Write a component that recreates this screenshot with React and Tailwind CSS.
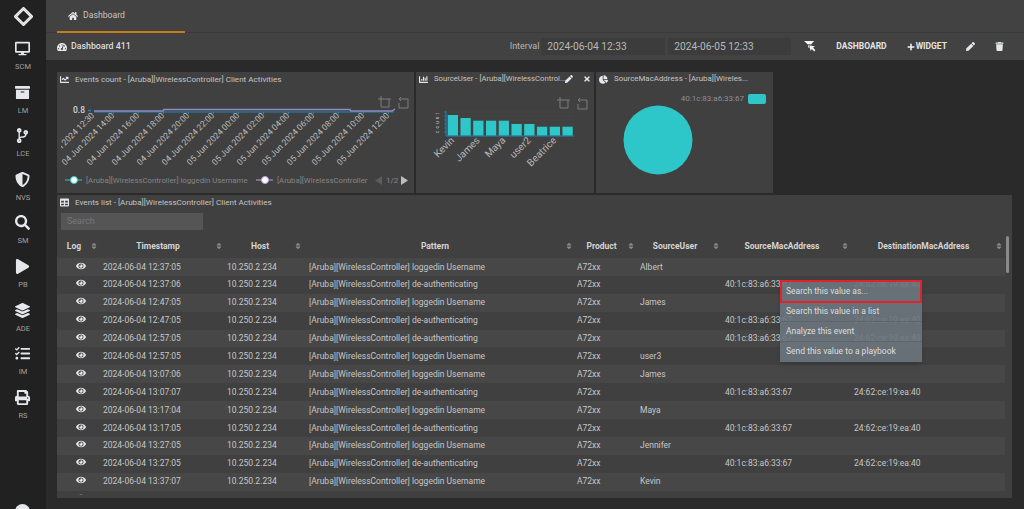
import React from "react";
import {
  FaDesktop,
  FaArchive,
  FaCodeBranch,
  FaShieldAlt,
  FaSearch,
  FaPlay,
  FaLayerGroup,
  FaTasks,
  FaPrint,
  FaHome,
  FaTachometerAlt,
  FaChartLine,
  FaChartBar,
  FaChartPie,
  FaTable,
  FaPen,
  FaTimes,
  FaEye,
  FaTrash,
  FaPlus,
  FaSort,
} from "react-icons/fa";

const navItems = [
  { label: "SCM", icon: FaDesktop },
  { label: "LM", icon: FaArchive },
  { label: "LCE", icon: FaCodeBranch },
  { label: "NVS", icon: FaShieldAlt },
  { label: "SM", icon: FaSearch },
  { label: "PB", icon: FaPlay },
  { label: "ADE", icon: FaLayerGroup },
  { label: "IM", icon: FaTasks },
  { label: "RS", icon: FaPrint },
];

const login = "[Aruba][WirelessController] loggedin Username";
const deauth = "[Aruba][WirelessController] de-authenticating";
const mac = "40:1c:83:a6:33:67";
const dest = "24:62:ce:19:ea:40";

const rows = [
  ["2024-06-04 12:37:05", login, "Albert", "", ""],
  ["2024-06-04 12:37:06", deauth, "", mac, dest],
  ["2024-06-04 12:47:05", login, "James", "", ""],
  ["2024-06-04 12:47:05", deauth, "", mac, dest],
  ["2024-06-04 12:57:05", deauth, "", mac, dest],
  ["2024-06-04 12:57:05", login, "user3", "", ""],
  ["2024-06-04 13:07:06", login, "James", "", ""],
  ["2024-06-04 13:07:07", deauth, "", mac, dest],
  ["2024-06-04 13:17:04", login, "Maya", "", ""],
  ["2024-06-04 13:17:05", deauth, "", mac, dest],
  ["2024-06-04 13:27:05", login, "Jennifer", "", ""],
  ["2024-06-04 13:27:05", deauth, "", mac, dest],
  ["2024-06-04 13:37:07", login, "Kevin", "", ""],
  ["2024-06-04 13:37:08", deauth, "", mac, dest],
];

const columns = [
  { name: "Log", width: "w-[43px]" },
  { name: "Timestamp", width: "w-[125px]" },
  { name: "Host", width: "w-[79px]" },
  { name: "Pattern", width: "w-[271px]" },
  { name: "Product", width: "w-[62px]" },
  { name: "SourceUser", width: "w-[85px]" },
  { name: "SourceMacAddress", width: "w-[129px]" },
  { name: "DestinationMacAddress", width: "w-[154px]" },
];

const chart1Labels = [
  "04 Jun 2024 14:00",
  "04 Jun 2024 16:00",
  "04 Jun 2024 18:00",
  "04 Jun 2024 20:00",
  "04 Jun 2024 22:00",
  "05 Jun 2024 00:00",
  "05 Jun 2024 02:00",
  "05 Jun 2024 04:00",
  "05 Jun 2024 06:00",
  "05 Jun 2024 08:00",
  "05 Jun 2024 10:00",
  "05 Jun 2024 12:00",
];

const bars = [115, 118, 120.7, 120.7, 120.7, 124, 124, 126.7, 126.7, 126.7];
const barLabels = ["Kevin", "James", "Maya", "user2", "Beatrice"];

function Toolbox({ x, y }) {
  return (
    <g fill="none" stroke="#7d7d7d" strokeWidth="1">
      <path d={`M${x + 3} ${y}v3h-3M${x + 3} ${y + 3}h8v8h-8v-8M${x + 11} ${y + 3}h2`} />
      <path d={`M${x + 21} ${y + 3}h9v9h-9v-5M${x + 21} ${y + 3}l2-2M${x + 21} ${y + 3}l2 2`} />
    </g>
  );
}

function Logo() {
  return (
    <svg viewBox="0 0 20 20" className="w-[19px] h-[19px] text-gray-100">
      <path d="M10 1.5 18.5 10 10 18.5 1.5 10Z" fill="none" stroke="currentColor" strokeWidth="3" strokeLinejoin="round" />
      <path d="M10 1.5 18.5 10 10 18.5 1.5 10Z" fill="none" stroke="#9a9a9a" strokeWidth="0.5" />
    </svg>
  );
}

function FilterCursor() {
  return (
    <svg viewBox="0 0 13 12" className="w-[12px] h-[11px] text-gray-100" fill="currentColor">
      <path d="M0 0h11L7.6 3.8 4.6 3.4 6 8 4.5 6.8V4Z" />
      <path d="M5.6 4.6 12 6 9.8 7.2 12.4 10 11 11.4 8.4 8.6 7.2 11Z" />
    </svg>
  );
}

function WidgetTitle({ icon: Icon, children, size = "text-[8.1px]" }) {
  return (
    <div className={`h-[14px] flex items-center gap-[6px] pl-[3px] ${size} text-[#c4c4c4] whitespace-nowrap`}>
      <Icon className="text-[9px] text-gray-200 shrink-0" />
      <span>{children}</span>
    </div>
  );
}

export default function App() {
  return (
    <div className="w-[1024px] h-[509px] overflow-hidden flex bg-[#2a2a2a] font-['Roboto',sans-serif]">
      <aside className="w-[46px] h-full shrink-0 bg-[#212121] relative flex flex-col items-center pt-[7px]">
        <Logo />
        <nav className="flex flex-col items-center mt-[13px]">
          {navItems.map(({ label, icon: Icon }) => (
            <div key={label} className="h-[43.6px] flex flex-col items-center text-[#a0a0a0]">
              <div className="h-[19px] flex items-center">
                <Icon className="text-[15px] text-gray-200" />
              </div>
              <span className="text-[7.5px] mt-[4px] leading-[10px]">{label}</span>
            </div>
          ))}
        </nav>
        <div className="absolute left-[15px] top-[504px] w-[15px] h-[15px] rounded-full bg-gray-200" />
      </aside>

      <main className="flex-1 min-w-0 flex flex-col">
        <div className="h-[33px] bg-[#424242] border-b border-[#3a3a3a] pl-[11px] shrink-0">
          <div className="w-[128px] h-[33px] border-b-2 border-[#c77c1e] flex items-center pl-[11px] pt-[1px] gap-[5px] text-[8.7px] text-[#c4c4c4]">
            <FaHome className="text-[10px] text-gray-200" />
            <span>Dashboard</span>
          </div>
        </div>

        <div className="h-[27px] bg-[#424242] shrink-0 flex items-center pl-[11px] text-[#dddddd]">
          <FaTachometerAlt className="text-[10px] text-gray-200" />
          <span className="ml-[4px] text-[8.8px] font-medium">Dashboard 411</span>
          <span className="ml-auto text-[9px] text-[#b5b5b5]">Interval</span>
          <div className="ml-[2px] w-[124px] h-[17px] bg-[#3c3c3c] flex items-center pl-[6px] text-[10.2px] text-[#b8b8b8]">2024-06-04 12:33</div>
          <div className="ml-[3px] w-[123px] h-[17px] bg-[#3c3c3c] flex items-center pl-[6px] text-[10.2px] text-[#b8b8b8]">2024-06-05 12:33</div>
          <div className="ml-[13px]"><FilterCursor /></div>
          <span className="ml-[20px] text-[8.5px] font-bold text-[#e4e4e4]">DASHBOARD</span>
          <FaPlus className="ml-[20px] text-[8px] text-gray-100" />
          <span className="ml-[1px] text-[8.5px] font-bold text-[#e4e4e4]">WIDGET</span>
          <FaPen className="ml-[19px] text-[9px] text-gray-200" />
          <FaTrash className="ml-[20px] mr-[20px] text-[9px] text-gray-200" />
        </div>

        <div className="pl-[11px] pt-[12px] flex flex-col gap-[2px] relative">
          <div className="flex gap-[2px] h-[121px]">
            <section className="w-[357px] bg-[#404040] overflow-hidden">
              <WidgetTitle icon={FaChartLine}>Events count - [Aruba][WirelessController] Client Activities</WidgetTitle>
              <svg viewBox="57 86 357 107" className="block w-[357px] h-[107px]">
                <text x="85" y="113" textAnchor="end" fontSize="8.5" fontWeight="500" fill="#d5d5d5">0.8</text>
                <path d="M88 110.5h3" stroke="#0b84c4" strokeWidth="1.5" />
                <path d="M94 112H394" stroke="#1f85b8" strokeWidth="1" />
                {chart1Labels.map((label, i) => (
                  <path key={label} d={`M${113.5 + i * 25} 112v2`} stroke="#1f85b8" />
                ))}
                <path d="M94 111H163L164 109.5H350L351 111H392L395 109" fill="none" stroke="#8f8cc4" strokeWidth="1.5" />
                <Toolbox x={378} y={96} />
                <text transform="rotate(-45 95 116)" x="95" y="116" textAnchor="end" fontSize="8.5" fill="#bcbcbc">04 Jun 2024 12:30</text>
                {chart1Labels.map((label, i) => (
                  <text key={label} transform={`rotate(-45 ${115 + i * 25} 116)`} x={115 + i * 25} y="116" textAnchor="end" fontSize="8.5" fill="#bcbcbc">
                    {label}
                  </text>
                ))}
                <rect x="40" y="86" width="21" height="95" fill="#404040" />
                <path d="M65 180h17" stroke="#2ec7c9" />
                <circle cx="74" cy="180" r="3.5" fill="#fff" stroke="#2ec7c9" />
                <text x="86" y="183" fontSize="7.8" fill="#858585">{login}</text>
                <path d="M256 180h17" stroke="#b6a2de" />
                <circle cx="265" cy="180" r="3.5" fill="#fff" stroke="#b6a2de" />
                <text x="277" y="183" fontSize="7.8" fill="#858585">[Aruba][WirelessController</text>
                <path d="M382 176v9l-7-4.5Z" fill="#5c5c5c" />
                <text x="386" y="183" fontSize="8" fill="#8a8a8a">1/2</text>
                <path d="M401 176v9l7-4.5Z" fill="#bdbdbd" />
              </svg>
            </section>

            <section className="w-[178px] bg-[#404040] overflow-hidden relative">
              <WidgetTitle icon={FaChartBar} size="text-[7.7px]">SourceUser - [Aruba][WirelessControl...</WidgetTitle>
              <FaPen className="absolute left-[149px] top-[3px] text-[8px] text-gray-200" />
              <FaTimes className="absolute left-[167px] top-[3px] text-[8px] text-gray-200" />
              <svg viewBox="416 86 178 107" className="block w-[178px] h-[107px]">
                <Toolbox x={557} y={97} />
                {[112, 116, 120, 124, 128, 132].map((y) => (
                  <path key={y} d={`M444 ${y}H573`} stroke="#4a4a4a" strokeWidth="0.5" />
                ))}
                {[112, 116, 120, 124, 128, 132].map((y) => (
                  <path key={y} d={`M444 ${y}h2`} stroke="#1f85b8" strokeWidth="0.75" />
                ))}
                {bars.map((top, i) => (
                  <rect key={i} x={447.7 + i * 12.75} y={top} width="10.3" height={135.7 - top} fill="#2ec7c9" />
                ))}
                <path d="M446 111V136H574" fill="none" stroke="#1f85b8" strokeWidth="1" />
                <text transform="rotate(-90 439 123)" x="439" y="123" textAnchor="middle" fontSize="4.5" textLength="20" fill="#c8c8c8">count</text>
                {barLabels.map((label, i) => (
                  <text key={label} transform={`rotate(-45 ${455 + i * 25.5} 141)`} x={455 + i * 25.5} y="141" textAnchor="end" fontSize="10" fill="#b5b5b5">
                    {label}
                  </text>
                ))}
              </svg>
            </section>

            <section className="w-[177px] bg-[#404040] overflow-hidden">
              <WidgetTitle icon={FaChartPie} size="text-[7.9px]">SourceMacAddress - [Aruba][Wireles...</WidgetTitle>
              <svg viewBox="596 86 177 107" className="block w-[177px] h-[107px]">
                <text x="744" y="101" textAnchor="end" fontSize="8" fill="#8f8f8f">{mac}</text>
                <rect x="748" y="94" width="18" height="10" rx="2" fill="#2ec7c9" />
                <circle cx="658" cy="140" r="34.5" fill="#2ec7c9" />
              </svg>
            </section>
          </div>

          <section className="w-[955px] h-[303px] bg-[#404040] relative">
            <WidgetTitle icon={FaTable}>Events list - [Aruba][WirelessController] Client Activities</WidgetTitle>
            <div className="ml-[4px] mt-[4px] w-[142px] h-[17px] bg-[#555555] flex items-center pl-[6px] text-[9px] text-[#777777]">Search</div>
            <div className="mt-[4px] h-[261px] overflow-hidden">
              <table className="table-fixed w-[948px] text-[8.5px]">
                <thead>
                  <tr className="h-[24px]">
                    {columns.map((col) => (
                      <th key={col.name} className={`${col.width} relative font-bold text-[#d5d5d5] text-center pr-[9px] pt-[1px]`}>
                        {col.name}
                        <FaSort className="absolute right-[2px] top-[8px] text-[8px] text-[#8a8a8a]" />
                      </th>
                    ))}
                  </tr>
                </thead>
                <tbody className="text-[#c6c6c6] whitespace-nowrap">
                  {rows.map((row, i) => (
                    <tr key={i} className={i % 2 === 0 ? "h-[17.9px] bg-[#474747]" : "h-[17.9px] bg-[#404040]"}>
                      <td className="text-center pl-[5px]">
                        <FaEye className="inline-block text-[10px] text-gray-200 mb-[3px]" />
                      </td>
                      <td className="pl-[3px]">{row[0]}</td>
                      <td className="pl-[2px]">10.250.2.234</td>
                      <td className="pl-[5px]">{row[1]}</td>
                      <td className="pl-[2px]">A72xx</td>
                      <td className="pl-[3px]">{row[2]}</td>
                      <td className="pl-[3px]">{row[3]}</td>
                      <td className="pl-[3px]">{row[4]}</td>
                    </tr>
                  ))}
                </tbody>
              </table>
            </div>
            <div className="absolute left-[949px] top-[41px] w-[3px] h-[37px] rounded-full bg-[#8a8a8a]" />
          </section>

          <div className="absolute left-[734px] top-[220px] w-[142px] bg-[#6c757d]/90 text-[8.5px] text-[#dedede] shadow-md">
            <div className="h-[22.5px] border-2 border-[#e2212b] flex items-center pl-[4px]">Search this value as...</div>
            <div className="h-[19.7px] border-b border-[#5c646c] flex items-center pl-[6px] pb-[1px]">Search this value in a list</div>
            <div className="h-[19.7px] border-b border-[#5c646c] flex items-center pl-[6px] pb-[1px]">Analyze this event</div>
            <div className="h-[19.7px] flex items-center pl-[6px] pb-[1px]">Send this value to a playbook</div>
          </div>
        </div>
      </main>
    </div>
  );
}
